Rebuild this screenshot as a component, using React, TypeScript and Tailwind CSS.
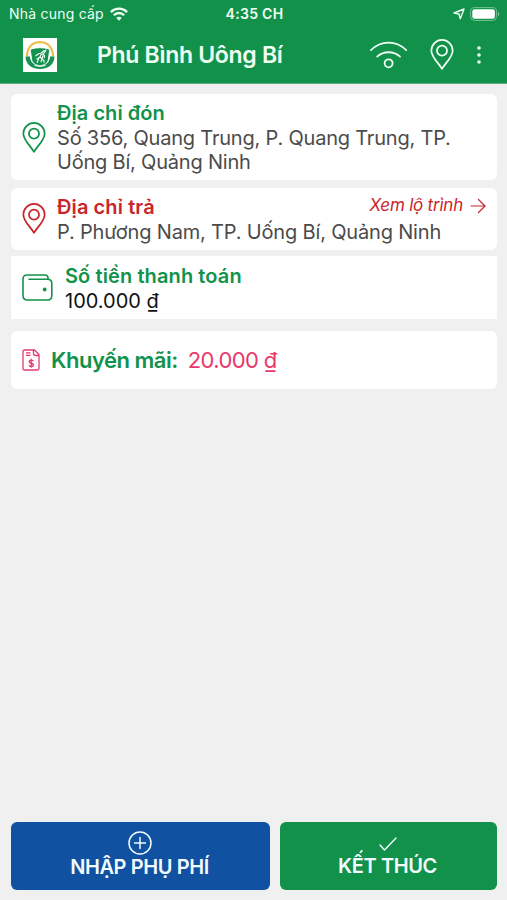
import type { ReactNode } from "react";

type IconProps = { className?: string };

function PinIcon({ className }: IconProps) {
  return (
    <svg viewBox="0 0 24 32" className={className} fill="none" stroke="currentColor" strokeWidth="1.8">
      <path d="M12 30.8C8.6 24.8 1 18.6 1 12a11 11 0 0 1 22 0C23 18.6 15.4 24.8 12 30.8Z" strokeLinejoin="round" />
      <circle cx="12" cy="12" r="5.2" />
    </svg>
  );
}

function StatusWifiIcon() {
  return (
    <svg viewBox="0 0 18 14" className="h-3.5 w-[18px]" fill="none" stroke="currentColor" strokeWidth="2.3">
      <path d="M0.9 5.1a11.4 11.4 0 0 1 16.2 0" />
      <path d="M3.8 8.2a7.3 7.3 0 0 1 10.4 0" />
      <path d="M9 13.8 6.3 11a3.8 3.8 0 0 1 5.4 0Z" fill="currentColor" stroke="none" />
    </svg>
  );
}

function SignalIcon() {
  return (
    <svg viewBox="0 0 38 28" className="h-7 w-[38px]" fill="none" stroke="currentColor" strokeWidth="1.8" strokeLinecap="round">
      <path d="M1 9.2C11 -0.8 26.200 -0.8 36.200 9.2" />
      <path d="M7.200 15.6c6.500-5.800 16.300-5.800 22.800 0" />
      <circle cx="18.600" cy="22.300" r="4" />
    </svg>
  );
}

function WalletIcon() {
  return (
    <svg viewBox="0 0 31 27" className="h-[27px] w-[31px] text-[#12924b]" fill="none" stroke="currentColor" strokeWidth="1.6" strokeLinecap="round">
      <path d="M26 5.2V4.1c0-2-1-3.1-3-3.1H5C2.4 1 1 2.6 1 5v16.5C1 24.5 2.5 26 5.5 26h20c3 0 4.3-1.4 4.3-4.2V9.5c0-2.9-1.3-4.3-4.3-4.3H7" />
      <circle cx="22.7" cy="15.5" r="1.9" fill="currentColor" stroke="none" />
    </svg>
  );
}

function VoucherIcon() {
  return (
    <svg viewBox="0 0 18 22" className="h-[22px] w-[18px] text-[#e8386b]" fill="none" stroke="currentColor" strokeWidth="1.3" strokeLinejoin="round">
      <path d="M2.5 1h10L17 5.5V19.5a1.5 1.5 0 0 1-1.5 1.5h-13A1.5 1.5 0 0 1 1 19.5v-17A1.5 1.5 0 0 1 2.5 1Z" />
      <path d="M11.5 1v3.5a2 2 0 0 0 2 2H17M4 3.8h4.5M4 6.3h4.5" />
      <path d="M11.3 12.2c-.5-.7-1.3-1-2.2-1-1.2 0-2 .6-2 1.5 0 2.2 4.3.9 4.3 3.2 0 .9-.9 1.6-2.2 1.6-1 0-1.9-.4-2.3-1.2M9.2 9.8v9" />
    </svg>
  );
}

function Logo() {
  return (
    <svg viewBox="0 0 34 34" className="size-[34px] bg-white" fill="none">
      <path d="M3.8 18.500C4.500 8.500 10 4.200 17 4.200S29.500 8.500 30.200 18.500" stroke="#edbd48" strokeWidth="2.2" />
      <path d="M2.600 18.500H7c.3 5.500 3.500 8.500 10 8.500s9.700-3 10-8.500h4.400c0 7.500-5.400 12.500-14.400 12.500S2.600 26 2.600 18.500Z" fill="#159250" />
      <path d="M8.500 10.800c5.300-1.500 11.700-1.500 17 0l1.200 1.500-1.400 9.700c-.5 3.200-3.500 4.800-8.300 6-4.800-1.200-7.800-2.800-8.300-6l-1.400-9.700Z" fill="#159250" stroke="#fff" strokeWidth="1" />
      <path d="m11.500 27.500 5.500.9 5.500-.9" stroke="#fff" strokeWidth="1" />
      <path d="m12.500 18 3.500-2.500 2-.3 2.500-2.200 2.200-.6-1 2-2.200 1.600 2 1.500-.3 2.500M18.500 16l-2 3.500-3 1.800M17 19l2.200 2-1.400 3M15.800 20.500 14 24.800M20 17.500l-1 3 2 2.200v2" stroke="#fff" strokeWidth="1.1" />
    </svg>
  );
}

function StatusBar() {
  return (
    <div className="grid h-7 grid-cols-3 items-center pr-[7px] pl-[9px] text-[14px] leading-4">
      <div className="flex items-center gap-1.5">
        <span className="whitespace-nowrap tracking-[0.22px]">Nhà cung cấp</span>
        <StatusWifiIcon />
      </div>
      <div className="text-center font-semibold tracking-[0.3px]">4:35 CH</div>
      <div className="flex items-center justify-end gap-[5px]">
        <svg viewBox="0 0 12 12" className="size-3" fill="none" stroke="currentColor" strokeWidth="1.4" strokeLinejoin="round">
          <path d="M11 1 7.3 10.8 6 6 1 5Z" />
        </svg>
        <svg viewBox="0 0 30 14" className="h-3.5 w-[30px]">
          <rect x="0.6" y="0.6" width="26" height="12.8" rx="4" fill="none" stroke="#76c497" strokeWidth="1" />
          <rect x="2.3" y="2.3" width="22.6" height="9.4" rx="2.3" fill="#fff" />
          <path d="M28 4.8c1.8.8 1.8 3.6 0 4.4Z" fill="#76c497" />
        </svg>
      </div>
    </div>
  );
}

function Header() {
  return (
    <header className="h-[84px] border-b border-[#5dad80] bg-[#12914a] text-[#eefff4]">
      <StatusBar />
      <div className="flex h-[53px] items-center pr-[26px] pl-[23px]">
        <Logo />
        <h1 className="ml-10 flex-1 whitespace-nowrap text-[23px] leading-7 font-semibold tracking-[-0.3px]">Phú Bình Uông Bí</h1>
        <SignalIcon />
        <PinIcon className="ml-[22px] h-[31px] w-6" />
        <svg viewBox="0 0 4 18" className="ml-[23px] h-[18px] w-1" fill="currentColor">
          <circle cx="2" cy="2" r="1.8" />
          <circle cx="2" cy="9" r="1.8" />
          <circle cx="2" cy="16" r="1.8" />
        </svg>
      </div>
    </header>
  );
}

function ActionButton({ label, className, children }: { label: string; className: string; children: ReactNode }) {
  return (
    <button className={`flex h-[68px] flex-col items-center rounded-md text-xl leading-6 font-semibold whitespace-nowrap text-[#f2fbff] ${className}`}>
      {children}
      <span className="tracking-[-0.4px]">{label}</span>
    </button>
  );
}

export default function App() {
  return (
    <div className="flex h-[900px] w-[507px] flex-col bg-[#f0f0f0] font-['Inter','Liberation_Sans',sans-serif]">
      <Header />

      <main className="flex flex-1 flex-col pt-[10px] pr-[10px] pl-[11px] text-xl leading-6 text-[#4b4b4b]">
        <section className="flex h-[86px] items-center rounded-md bg-white pl-[11px]">
          <PinIcon className="h-[31px] w-6 text-[#12924b]" />
          <div className="ml-[11px]">
            <h2 className="leading-[25px] font-semibold tracking-[0.05px] text-[#12924b]">Địa chỉ đón</h2>
            <p className="whitespace-nowrap tracking-[-0.2px]">
              Số 356, Quang Trung, P. Quang Trung, TP.
              <br />
              Uống Bí, Quảng Ninh
            </p>
          </div>
        </section>

        <section className="mt-2 flex h-[62px] items-center rounded-md bg-white pr-[11px] pl-[11px]">
          <PinIcon className="mb-[2px] h-[31px] w-6 text-[#c9252b]" />
          <div className="ml-[11px] flex-1">
            <div className="flex items-start justify-between">
              <h2 className="leading-[25px] font-semibold tracking-[0.1px] text-[#c9252b]">Địa chỉ trả</h2>
              <a className="flex items-center gap-[7px] text-[17px] leading-5 text-[#c9252b]">
                <span className="tracking-[-0.22px] italic">Xem lộ trình</span>
                <svg viewBox="0 0 16 16" className="mt-[3px] size-4" fill="none" stroke="currentColor" strokeWidth="1.2" strokeLinecap="round" strokeLinejoin="round">
                  <path d="M1 8h14M8.5 1.5 15 8l-6.5 6.5" />
                </svg>
              </a>
            </div>
            <p className="whitespace-nowrap tracking-[-0.17px]">P. Phương Nam, TP. Uống Bí, Quảng Ninh</p>
          </div>
        </section>

        <section className="mt-[6px] flex h-[63px] items-center bg-white pl-[11px]">
          <WalletIcon />
          <div className="mt-[2px] ml-3">
            <h2 className="leading-[25px] font-semibold tracking-[0.1px] text-[#12924b]">Số tiền thanh toán</h2>
            <p className="text-[#111]">100.000 ₫</p>
          </div>
        </section>

        <section className="mt-3 flex h-[58px] items-center rounded-md bg-white pl-[11px]">
          <VoucherIcon />
          <h2 className="ml-[11px] text-[22px] font-semibold tracking-[-0.5px] text-[#12924b]">Khuyến mãi:</h2>
          <span className="ml-[10px] text-[22px] tracking-[-0.6px] text-[#e8386b]">20.000 ₫</span>
        </section>

        <footer className="mt-auto mb-[10px] flex gap-[10px]">
          <ActionButton label="NHẬP PHỤ PHÍ" className="w-[259px] bg-[#1151a1] pt-[9px] pr-[2px]">
            <svg viewBox="0 0 24 24" className="size-6" fill="none" stroke="currentColor" strokeWidth="1.5" strokeLinecap="round">
              <circle cx="12" cy="12" r="11" />
              <path d="M12 6.5v11M6.5 12h11" />
            </svg>
          </ActionButton>
          <ActionButton label="KẾT THÚC" className="w-[217px] bg-[#12914a] pt-[15px] pr-[2px]">
            <svg viewBox="0 0 18 14" className="mb-[3px] h-3.5 w-[18px]" fill="none" stroke="currentColor" strokeWidth="1.4" strokeLinecap="round" strokeLinejoin="round">
              <path d="m1 8 4.5 5L17 1" />
            </svg>
          </ActionButton>
        </footer>
      </main>
    </div>
  );
}
